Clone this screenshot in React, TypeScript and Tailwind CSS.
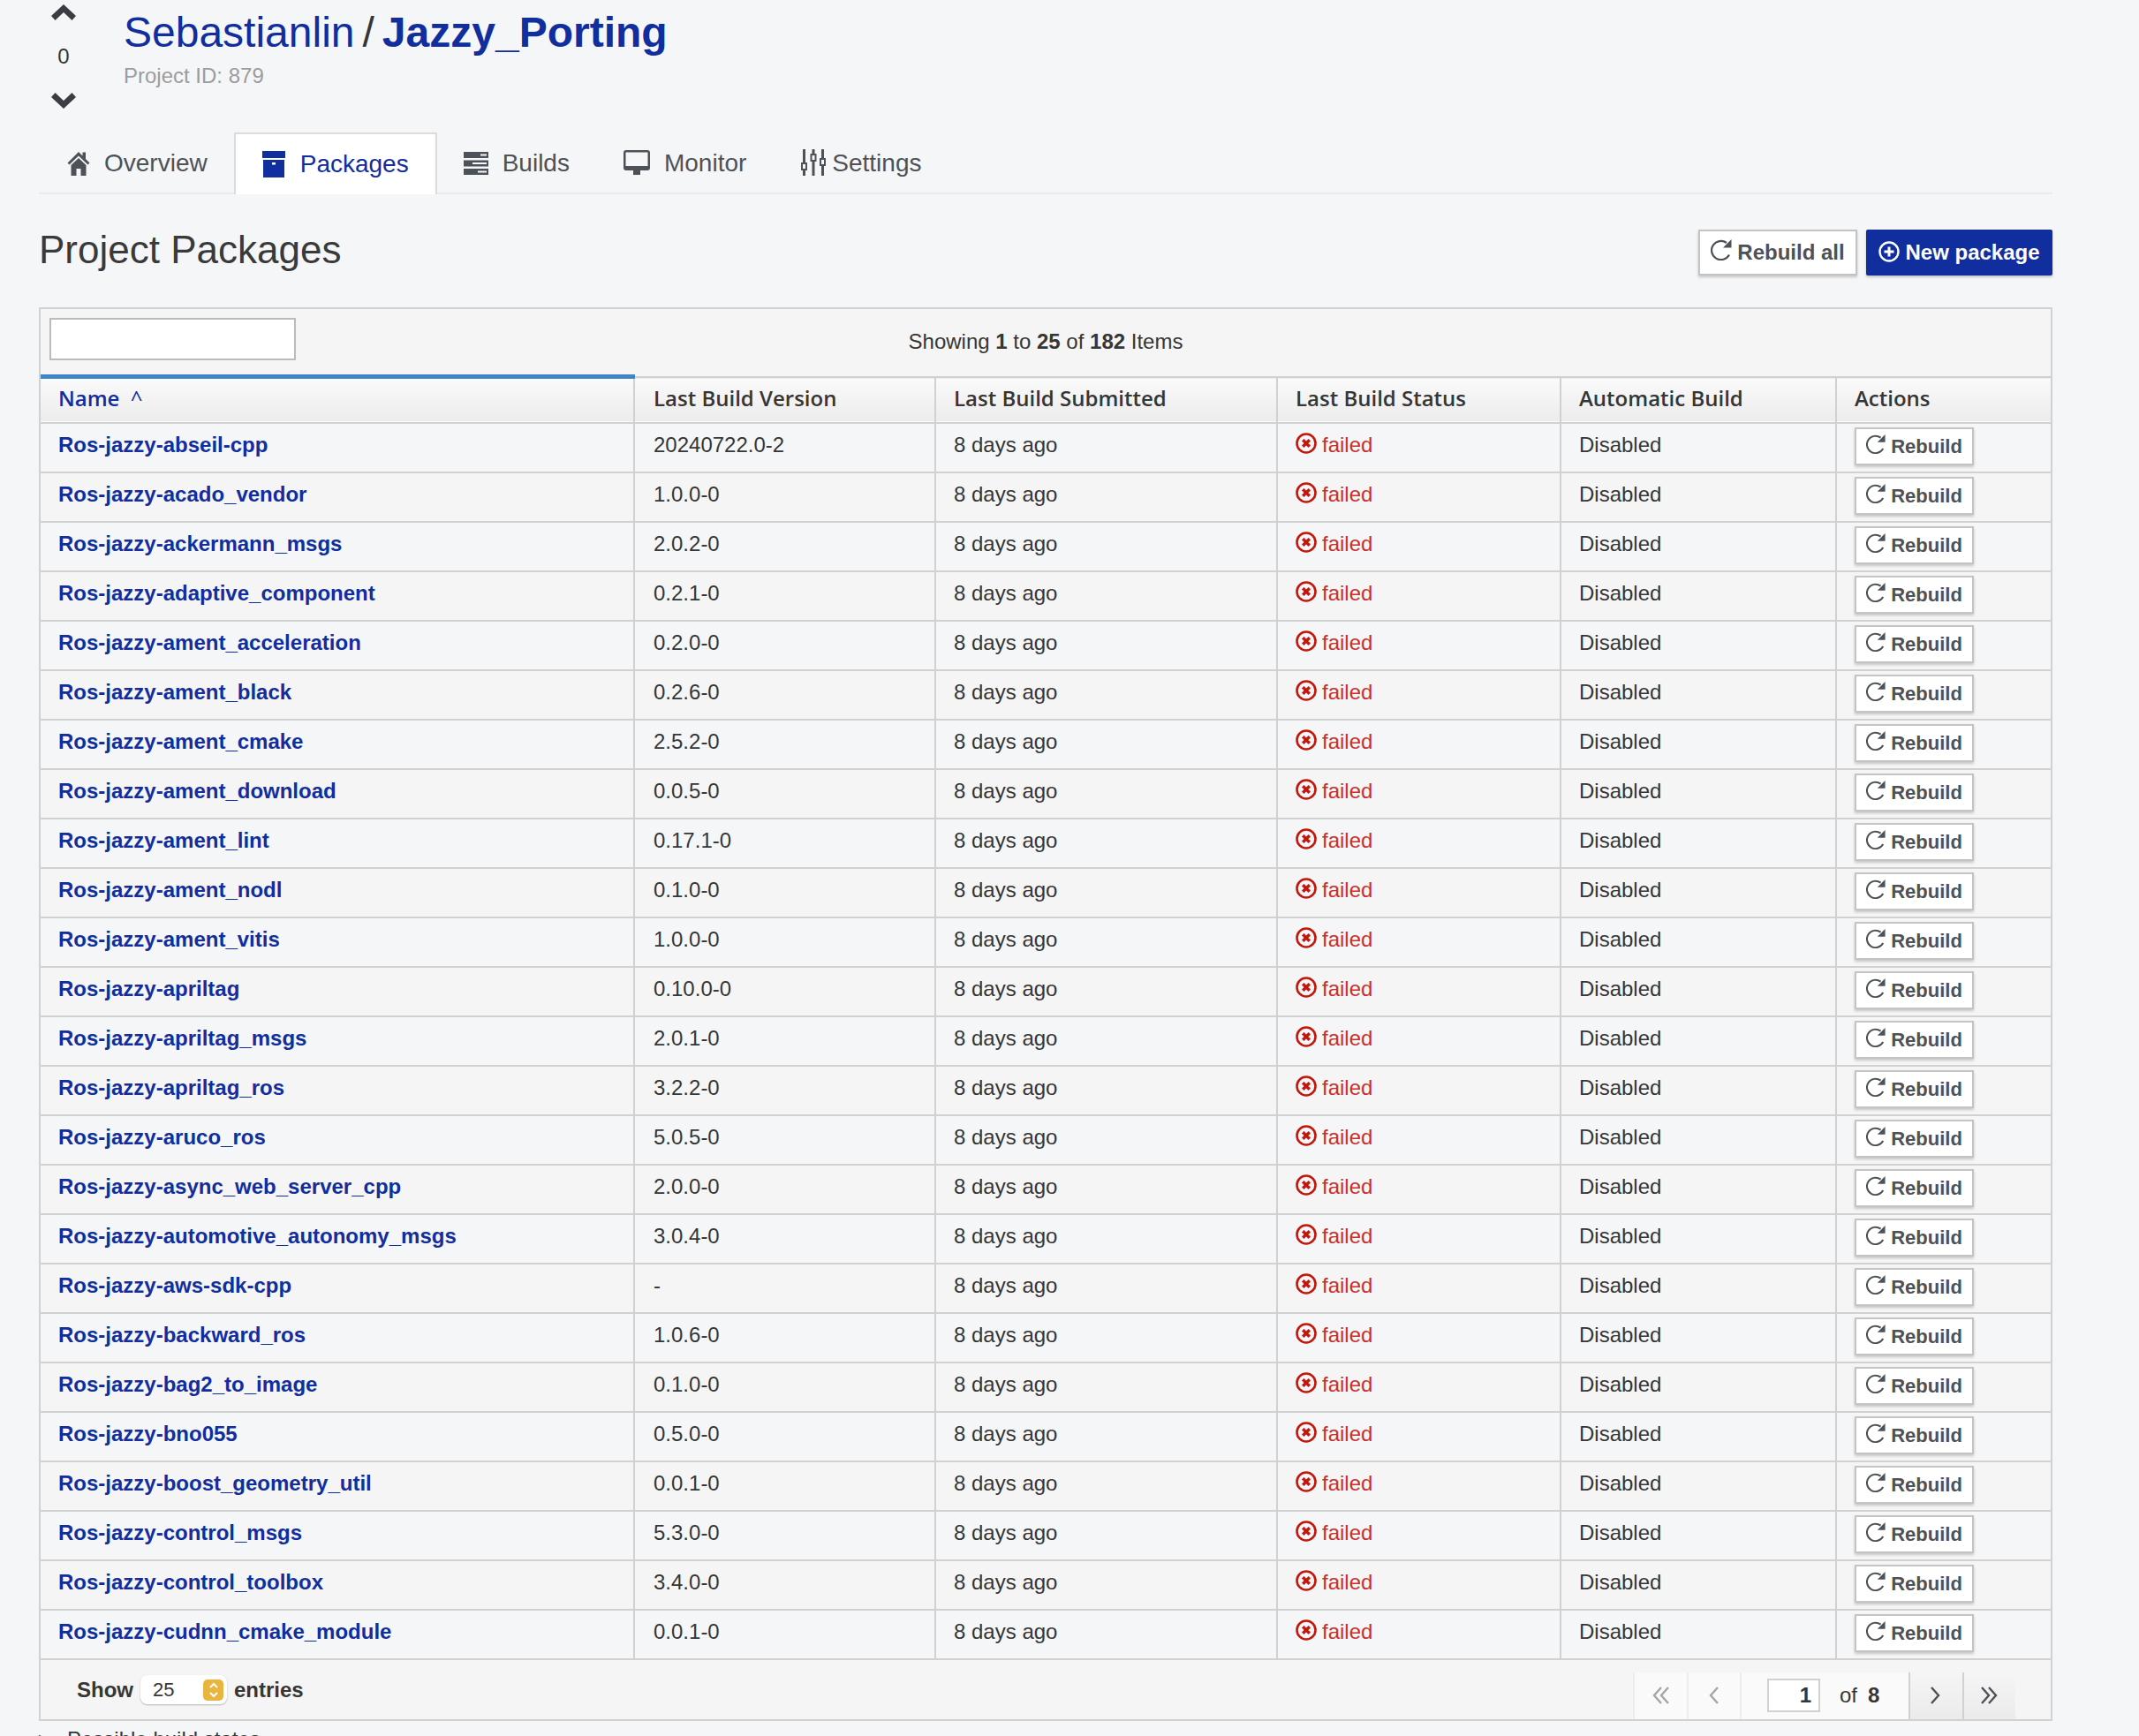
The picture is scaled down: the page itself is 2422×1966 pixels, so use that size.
const font = { fontFamily: '"Liberation Sans", Arial, sans-serif' }

const packages = [
  ['abseil-cpp', '20240722.0-2'],
  ['acado_vendor', '1.0.0-0'],
  ['ackermann_msgs', '2.0.2-0'],
  ['adaptive_component', '0.2.1-0'],
  ['ament_acceleration', '0.2.0-0'],
  ['ament_black', '0.2.6-0'],
  ['ament_cmake', '2.5.2-0'],
  ['ament_download', '0.0.5-0'],
  ['ament_lint', '0.17.1-0'],
  ['ament_nodl', '0.1.0-0'],
  ['ament_vitis', '1.0.0-0'],
  ['apriltag', '0.10.0-0'],
  ['apriltag_msgs', '2.0.1-0'],
  ['apriltag_ros', '3.2.2-0'],
  ['aruco_ros', '5.0.5-0'],
  ['async_web_server_cpp', '2.0.0-0'],
  ['automotive_autonomy_msgs', '3.0.4-0'],
  ['aws-sdk-cpp', '-'],
  ['backward_ros', '1.0.6-0'],
  ['bag2_to_image', '0.1.0-0'],
  ['bno055', '0.5.0-0'],
  ['boost_geometry_util', '0.0.1-0'],
  ['control_msgs', '5.3.0-0'],
  ['control_toolbox', '3.4.0-0'],
  ['cudnn_cmake_module', '0.0.1-0'],
]

function Chevron({ down }: { down?: boolean }) {
  return (
    <svg width="28" height="18" viewBox="0 0 28 18" className={down ? 'rotate-180' : ''}>
      <path d="M14 0 L28 13 L23.5 18 L14 9 L4.5 18 L0 13 Z" fill="#3a3d42" />
    </svg>
  )
}

function RebuildIcon({ size = 24 }: { size?: number }) {
  return (
    <svg width={size} height={size} viewBox="0 0 24 24" className="-mt-[6px] shrink-0">
      <path d="M21 17.5 A10.6 10.6 0 1 1 18 4" fill="none" stroke="#4d5258" strokeWidth="2.2" />
      <path d="M23.5 0 V9.5 H14 Z" fill="#4d5258" />
    </svg>
  )
}

function FailedIcon() {
  return (
    <svg width="24" height="24" viewBox="0 0 24 24" className="-mt-[3px] shrink-0">
      <circle cx="12" cy="12" r="10.5" fill="none" stroke="#c4170c" strokeWidth="2.6" />
      <path d="M8.2 8.2 L15.8 15.8 M15.8 8.2 L8.2 15.8" stroke="#c4170c" strokeWidth="3.4" />
    </svg>
  )
}

function HomeIcon() {
  return (
    <svg width="26" height="30" viewBox="0 0 26 30" className="shrink-0">
      <path d="M13 2 L0.5 14.5 L2.5 16.5 L13 6.5 L23.5 16.5 L25.5 14.5 L21 10 V2.5 H17.5 V6.5 Z" fill="#4d5258" />
      <path d="M4.5 17 L13 9 L21.5 17 V29 H15.5 V21 H10.5 V29 H4.5 Z" fill="#4d5258" />
    </svg>
  )
}

function PackageIcon() {
  return (
    <svg width="26" height="30" viewBox="0 0 26 30" className="shrink-0">
      <rect x="0" y="0" width="26" height="8" fill="#112e9e" />
      <path d="M1 10 H25 V30 H1 Z M11 13 V15.5 H15 V13 Z" fill="#112e9e" fillRule="evenodd" />
    </svg>
  )
}

function BuildsIcon() {
  return (
    <svg width="28" height="26" viewBox="0 0 28 26" className="shrink-0">
      <path d="M0 0 H28 V7 H0 Z M0 9.5 H28 V16.5 H0 Z M0 19 H28 V26 H0 Z" fill="#4d5258" />
      <rect x="19" y="2.5" width="7" height="2" fill="#f5f6f8" />
      <rect x="10" y="12" width="16" height="2" fill="#f5f6f8" />
      <rect x="16" y="21.5" width="10" height="2" fill="#f5f6f8" />
    </svg>
  )
}

function MonitorIcon() {
  return (
    <svg width="30" height="28" viewBox="0 0 30 28" className="-mt-[2px] shrink-0">
      <path d="M3 0 H27 A3 3 0 0 1 30 3 V20 A3 3 0 0 1 27 23 H19 V28 H11 V23 H3 A3 3 0 0 1 0 20 V3 A3 3 0 0 1 3 0 Z M2.5 2.5 V18 H27.5 V2.5 Z" fill="#4d5258" fillRule="evenodd" />
    </svg>
  )
}

function SlidersIcon() {
  return (
    <svg width="28" height="30" viewBox="0 0 28 30" className="-mt-[2px] shrink-0">
      <path d="M3.5 0 V30 M14 0 V30 M24.5 0 V30" stroke="#4d5258" strokeWidth="3" />
      <rect x="1" y="16" width="5" height="7" fill="#f5f6f8" stroke="#4d5258" strokeWidth="2" />
      <rect x="11.5" y="6" width="5" height="7" fill="#f5f6f8" stroke="#4d5258" strokeWidth="2" />
      <rect x="22" y="11" width="5" height="7" fill="#f5f6f8" stroke="#4d5258" strokeWidth="2" />
    </svg>
  )
}

function Angle({ dir, double, color }: { dir: 'left' | 'right'; double?: boolean; color: string }) {
  const flip = dir === 'right' ? 'rotate-180' : ''
  return (
    <svg width="20" height="22" viewBox="0 0 20 22" className={flip}>
      {double ? (
        <path d="M10 2 L2 11 L10 20 M18 2 L10 11 L18 20" fill="none" stroke={color} strokeWidth="2.4" />
      ) : (
        <path d="M14 2 L6 11 L14 20" fill="none" stroke={color} strokeWidth="2.4" />
      )}
    </svg>
  )
}

function Tab({ icon, label, active, cls }: { icon: React.ReactNode; label: string; active?: boolean; cls: string }) {
  return (
    <div
      className={`flex h-[70px] items-center text-[28px] -mb-[2px] ${cls} ${
        active ? 'border-x-2 border-t-2 border-[#dcdcdc] bg-white text-[#112e9e]' : 'text-[#4d5258]'
      }`}
    >
      {icon}
      <span>{label}</span>
    </div>
  )
}

export default function App() {
  return (
    <div className="h-[1966px] overflow-hidden bg-[#f5f6f8] text-[24px] text-[#363636]" style={font}>
      <div className="flex h-[150px] items-start pl-[58px] pt-[5px]">
        <div className="flex h-[118px] w-[28px] flex-col items-center justify-between">
          <Chevron />
          <span className="text-[24px] leading-none">0</span>
          <Chevron down />
        </div>
        <div className="ml-[54px]">
          <div className="mt-[2px] text-[48px] leading-[60px]">
            <span className="text-[#112e9e]">Sebastianlin</span>
            <span className="mx-[9px] text-[#363636]">/</span>
            <span className="font-bold text-[#112e9e]">Jazzy_Porting</span>
          </div>
          <div className="mt-[4px] text-[24px] leading-[30px] text-[#9c9c9c]">Project ID: 879</div>
        </div>
      </div>

      <div className="mx-[44px] flex h-[70px] w-[2280px] border-b-2 border-[#ebebeb]">
        <Tab icon={<HomeIcon />} label="Overview" cls="gap-[16px] pl-[32px] pr-[30px]" />
        <Tab icon={<PackageIcon />} label="Packages" active cls="gap-[17px] px-[30px]" />
        <Tab icon={<BuildsIcon />} label="Builds" cls="gap-[16px] px-[30px]" />
        <Tab icon={<MonitorIcon />} label="Monitor" cls="gap-[16px] px-[31px]" />
        <Tab icon={<SlidersIcon />} label="Settings" cls="gap-[7px] pl-[31px]" />
      </div>

      <div className="mx-[44px] mt-[40px] flex h-[52px] w-[2280px] items-center justify-between">
        <h1 className="-mt-[6px] text-[44px] leading-none text-[#3a3a3a]">Project Packages</h1>
        <div className="flex gap-[10px]">
          <button className="flex h-[52px] w-[180px] items-center justify-center gap-[6px] border-2 border-[#c4c4c4] bg-white text-[24px] font-bold text-[#4d5258] shadow-[0_2px_3px_rgba(0,0,0,0.2)]">
            <RebuildIcon />
            Rebuild all
          </button>
          <button className="flex h-[52px] w-[211px] items-center justify-center gap-[6px] rounded-[2px] bg-[#112e9e] text-[24px] font-bold text-white shadow-[0_2px_3px_rgba(0,0,0,0.2)]">
            <svg width="24" height="24" viewBox="0 0 24 24" className="-mt-[3px]">
              <circle cx="12" cy="12" r="10.5" fill="none" stroke="#fff" strokeWidth="2.4" />
              <path d="M12 6.5 V17.5 M6.5 12 H17.5" stroke="#fff" strokeWidth="3" />
            </svg>
            New package
          </button>
        </div>
      </div>

      <div className="mx-[44px] mt-[36px] w-[2280px] border-2 border-[#d1d1d1] bg-[#f5f5f5]">
        <div className="grid h-[74px] grid-cols-[1fr_auto_1fr] items-center px-[10px]">
          <input className="mb-[6px] h-[48px] w-[279px] border-2 border-[#bbbbbb] bg-white" />
          <div className="text-[24px]">
            Showing <b>1</b> to <b>25</b> of <b>182</b> Items
          </div>
          <div />
        </div>
        <table className="w-[2276px] table-fixed border-collapse">
          <colgroup>
            <col className="w-[672px]" />
            <col className="w-[341px]" />
            <col className="w-[387px]" />
            <col className="w-[321px]" />
            <col className="w-[312px]" />
            <col className="w-[243px]" />
          </colgroup>
          <thead>
            <tr className="h-[52px] border-y-2 border-[#d1d1d1] bg-gradient-to-b from-[#fafafa] to-[#ececec] text-left text-[24px] font-semibold" style={{ fontFamily: '"Open Sans", sans-serif' }}>
              <th className="border-t-[5px] border-t-[#3f86c8] pb-[4px] pl-[20px] font-semibold text-[#112e9e]">
                Name <span className="ml-[6px] text-[24px] font-normal">^</span>
              </th>
              {['Last Build Version', 'Last Build Submitted', 'Last Build Status', 'Automatic Build', 'Actions'].map((h, i) => (
                <th key={h} className={`border-l-2 border-[#d1d1d1] pb-[4px] font-semibold text-[#363636] ${i === 0 ? 'pl-[21px]' : 'pl-[20px]'}`}>{h}</th>
              ))}
            </tr>
          </thead>
          <tbody>
            {packages.map(([name, version], i) => (
              <tr key={name} className={`h-[56px] border-b-2 border-[#d1d1d1] ${i % 2 === 0 ? 'bg-[#f5f6f8]' : 'bg-[#f5f5f5]'}`}>
                <td className="pb-[6px] pl-[20px] font-bold text-[#112e9e]">Ros-jazzy-{name}</td>
                <td className="border-l-2 border-[#d1d1d1] pb-[6px] pl-[21px]">{version}</td>
                <td className="border-l-2 border-[#d1d1d1] pb-[6px] pl-[20px]">8 days ago</td>
                <td className="border-l-2 border-[#d1d1d1] pb-[6px] pl-[20px]">
                  <div className="flex items-center gap-[6px] text-[#c9302c]">
                    <FailedIcon />
                    failed
                  </div>
                </td>
                <td className="border-l-2 border-[#d1d1d1] pb-[6px] pl-[20px]">Disabled</td>
                <td className="border-l-2 border-[#d1d1d1] pb-[2px] pl-[20px]">
                  <button className="flex h-[43px] w-[135px] items-center justify-center gap-[6px] border-2 border-[#c4c4c4] bg-white text-[22px] font-bold text-[#4d5258] shadow-[0_2px_3px_rgba(0,0,0,0.2)]">
                    <RebuildIcon size={22} />
                    Rebuild
                  </button>
                </td>
              </tr>
            ))}
          </tbody>
        </table>
        <div className="flex h-[67px] items-start justify-between">
          <div className="mt-[16px] flex items-center pl-[41px] font-bold">
            Show
            <div className="mx-[8px] flex h-[33px] w-[98px] items-center justify-between rounded-[8px] bg-white pl-[14px] pr-[4px] text-[22px] font-normal shadow-[0_1px_2px_rgba(0,0,0,0.25)]">
              25
              <div className="flex h-[24px] w-[23px] items-center justify-center rounded-[5px] bg-[#e8b53f]">
                <svg width="12" height="20" viewBox="0 0 12 20">
                  <path d="M2 7 L6 3 L10 7 M2 13 L6 17 L10 13" fill="none" stroke="#fff" strokeWidth="2" />
                </svg>
              </div>
            </div>
            entries
          </div>
          <div className="mr-[40px] mt-[14px] flex h-[53px]">
            <div className="flex w-[61px] items-center justify-center border-l-2 border-[#ededed] bg-[#fafafa]">
              <Angle dir="left" double color="#a3a6a9" />
            </div>
            <div className="flex w-[60px] items-center justify-center border-l-2 border-[#ededed] bg-[#fafafa]">
              <Angle dir="left" color="#a3a6a9" />
            </div>
            <div className="flex w-[191px] items-center border-l-2 border-[#ededed] bg-[#fafafa] pl-[29px]">
              <div className="flex h-[38px] w-[60px] items-center justify-end border-2 border-[#d1d1d1] bg-white pr-[8px] font-bold">1</div>
              <span className="ml-[22px]">of</span>
              <b className="ml-[12px]">8</b>
            </div>
            <div className="flex w-[61px] items-center justify-center border-l-2 border-[#d1d1d1] bg-gradient-to-b from-[#f5f5f5] to-[#ebebeb] pr-[3px]">
              <Angle dir="right" color="#4d5258" />
            </div>
            <div className="flex w-[60px] items-center justify-center border-l-2 border-[#d1d1d1] bg-gradient-to-b from-[#f5f5f5] to-[#ebebeb] pr-[3px]">
              <Angle dir="right" double color="#4d5258" />
            </div>
          </div>
        </div>
      </div>
      <div className="mx-[44px] mt-[3px] flex items-center text-[24px]">
        <span className="mr-[20px] w-[12px] text-[16px]">▶</span>
        Possible build states
      </div>
    </div>
  )
}
